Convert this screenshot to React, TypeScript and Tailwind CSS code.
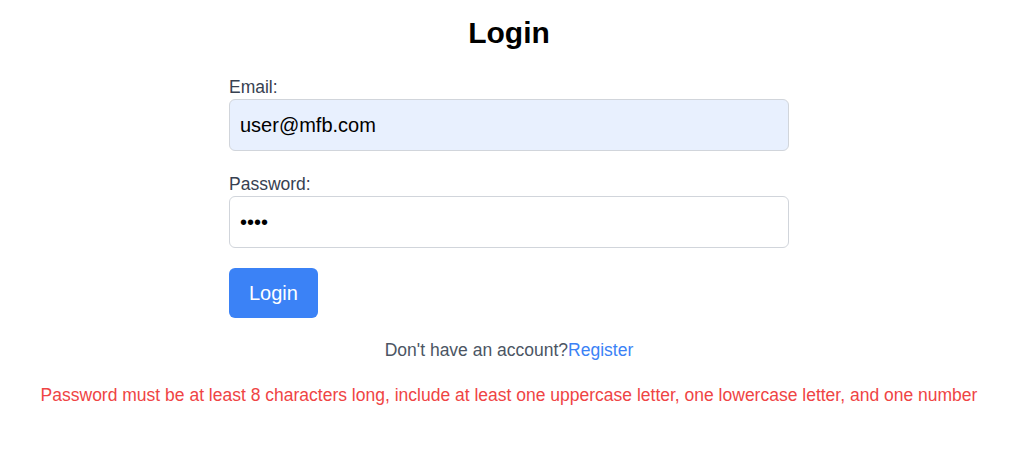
import React from "react";

export default function App() {
  return (
    <div className="min-h-screen bg-white pl-2 font-['Liberation_Sans',Arial,sans-serif]">
      <div className="flex flex-col items-center pt-[15px]">
        <h1 className="text-[30px] leading-9 font-bold text-black">Login</h1>
        <form className="mt-6 w-[560px]" onSubmit={(e) => e.preventDefault()}>
          <label className="block text-[17.5px] leading-6 text-[#374151]">Email:</label>
          <input
            type="email"
            defaultValue="user@mfb.com"
            className="block w-full rounded-md border border-[#d1d5db] bg-[#e8f0fe] px-2.5 py-[11px] text-xl leading-7 text-black outline-none"
          />
          <label className="mt-[21px] block text-[17.5px] leading-6 text-[#374151]">Password:</label>
          <input
            type="password"
            defaultValue="1234"
            className="block w-full rounded-md border border-[#d1d5db] bg-white px-2.5 py-[11px] text-xl leading-7 text-black outline-none"
          />
          <button
            type="submit"
            className="mt-5 rounded-md bg-[#3b82f6] px-5 py-[11px] text-xl leading-7 text-white"
          >
            Login
          </button>
        </form>
        <p className="mt-5 text-[17.5px] leading-6 text-[#4b5563]">
          Don't have an account?<a className="text-[#3b82f6]">Register</a>
        </p>
        <p className="mt-[21px] text-[17.5px] leading-6 text-[#ef4444]">
          Password must be at least 8 characters long, include at least one uppercase letter, one lowercase letter, and one number
        </p>
      </div>
    </div>
  );
}
